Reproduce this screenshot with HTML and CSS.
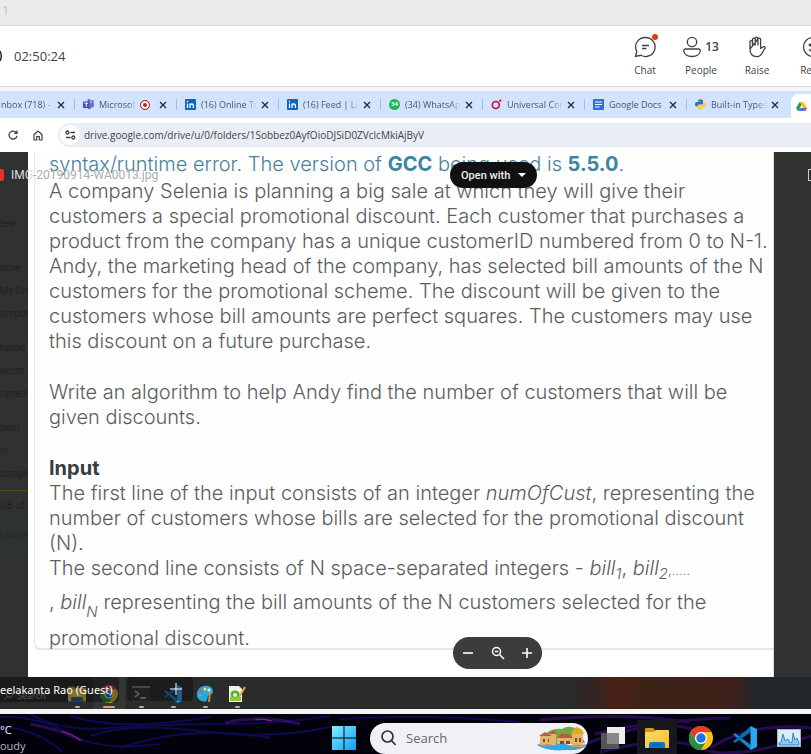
FILE: index.html
```html
<!DOCTYPE html>
<html lang="en">
<head>
<meta charset="utf-8">
<title>Meeting</title>
<link rel="stylesheet" href="styles.css">
</head>
<body>
<svg class="defs" aria-hidden="true">
  <defs>
    <linearGradient id="win" x1="0" y1="0" x2="1" y2="1"><stop offset="0" stop-color="#7ff0ff"/><stop offset="1" stop-color="#109bf5"/></linearGradient>
    <linearGradient id="fold" x1="0" y1="0" x2="1" y2="1"><stop offset="0" stop-color="#ffdc6b"/><stop offset="1" stop-color="#f9b92b"/></linearGradient>
  </defs>
  <symbol id="chrome" viewBox="0 0 24 24">
    <circle cx="12" cy="12" r="12" fill="#fbc116"/>
    <path d="M1.6 6A12 12 0 0 1 22.4 6H12A6 6 0 0 0 6.8 15Z" fill="#e33b2e"/>
    <path d="M1.6 6 6.8 15A6 6 0 0 0 17.2 15L12 24A12 12 0 0 1 1.6 6Z" fill="#229342"/>
    <circle cx="12" cy="12" r="6" fill="#fff"/><circle cx="12" cy="12" r="4.7" fill="#1a73e8"/>
  </symbol>
  <symbol id="vscode" viewBox="0 0 24 24">
    <path d="M0 8.500 2 7 18 19V24Z" fill="#0a86d4"/>
    <path d="M0 15.500 2 17 18 6V0Z" fill="#0b6ab0"/>
    <path d="M17.500 0 24 3V21L17.500 24Z" fill="#2ba5ee"/>
  </symbol>
  <symbol id="folder" viewBox="0 0 24 22">
    <path d="M0 2Q0 1 1 1H8L10 3V7H0Z" fill="#d9950b"/>
    <path d="M0 5H8.500L11 3H23Q24 3 24 4V20Q24 21 23 21H1Q0 21 0 20Z" fill="url(#fold)"/>
    <path d="M4 21V17Q4 15 6 15H18Q20 15 20 17V21Z" fill="#0d74c8"/><path d="M8 18H16" stroke="#075294"/>
  </symbol>
  <symbol id="linkedin" viewBox="0 0 11 11">
    <rect width="11" height="11" rx="1" fill="#0a66c2"/>
    <path d="M2.500 4.500V9M5 9V4.500M5 6.500Q5 5 6.700 5T8.400 6.500V9" fill="none" stroke="#fff" stroke-width="1.300"/><circle cx="2.500" cy="2.600" r=".8" fill="#fff"/>
  </symbol>
  <symbol id="close" viewBox="0 0 8 8"><path d="M1 1 7 7M7 1 1 7" stroke="#1f2a3a" stroke-width="1.300" fill="none"/></symbol>
</svg>

<div class="titlebar">1</div>

<header class="meeting">
  <div class="clock"><svg width="4" height="14" viewBox="0 0 4 14"><path d="M0 2Q2.500 7 0 12" stroke="#242424" stroke-width="1.500" fill="none"/></svg><span>02:50:24</span></div>
  <nav class="actions">
    <button class="action"><span class="glyph"><svg width="22" height="22" viewBox="0 0 22 22" fill="none" stroke="#424242" stroke-width="1.300"><path d="M11.500 1.500A9.500 9.500 0 1 1 7 19.300L1.500 20.500 2.800 15.500A9.500 9.500 0 0 1 11.500 1.500Z"/><path d="M8 9.500H15M8 12.500H12.500"/></svg><i class="dot"></i></span>Chat</button>
    <button class="action"><span class="glyph"><svg width="18" height="22" viewBox="0 0 18 22" fill="none" stroke="#424242" stroke-width="1.300"><circle cx="9" cy="6" r="4.700"/><path d="M2.500 13H15.500Q17.200 13 17.200 14.800C17.200 18.500 13.500 20.500 9 20.500S.8 18.500.8 14.800Q.8 13 2.500 13Z"/></svg><b>13</b></span>People</button>
    <button class="action"><span class="glyph"><svg width="18" height="22" viewBox="0 0 18 22" fill="none" stroke="#424242" stroke-width="1.300" stroke-linejoin="round"><path d="M2 13V5.500Q3.300 3.800 4.500 5.500V10M4.500 10V3Q5.800 1.200 7.200 3V9.500M7.200 3V2Q8.500.3 9.900 2V9.500M9.900 3Q11.300 1.200 12.600 3V12.500L15.300 10.700Q17 10.300 17.200 12C14.500 14.500 14.500 20.700 8.800 20.700C4 20.700 2 17.500 2 13Z"/></svg></span>Raise</button>
    <button class="action"><span class="glyph"><svg width="22" height="22" viewBox="0 0 22 22" fill="none" stroke="#424242" stroke-width="1.300"><circle cx="11" cy="11" r="9.500"/><path d="M7 13.500Q11 17 15 13.500"/><circle cx="8" cy="9" r=".8" fill="#424242"/><circle cx="14" cy="9" r=".8" fill="#424242"/></svg></span>React</button>
  </nav>
</header>

<div class="tabs">
  <div class="tab first"><span>nbox (718) -</span><button aria-label="Close"><svg><use href="#close"/></svg></button></div>
  <div class="tab"><svg class="fav" viewBox="0 0 11 11"><circle cx="6" cy="1.800" r="1.700" fill="#5b62d6"/><circle cx="9.500" cy="2.300" r="1.200" fill="#5b62d6"/><path d="M4 3.500H11V7Q10.500 9 8.700 8.500Q7.500 11 5 10Z" fill="#6b72dd"/><rect y="2.500" width="6.500" height="6.500" rx=".7" fill="#454bb5"/><path d="M1.500 4.200H5M3.250 4.200V7.800" stroke="#fff" fill="none"/></svg><span>Microsoft</span><i class="rec"></i><button aria-label="Close"><svg><use href="#close"/></svg></button></div>
  <div class="tab"><svg class="fav"><use href="#linkedin"/></svg><span>(16) Online Tutor</span><button aria-label="Close"><svg><use href="#close"/></svg></button></div>
  <div class="tab"><svg class="fav"><use href="#linkedin"/></svg><span>(16) Feed | LinkedIn</span><button aria-label="Close"><svg><use href="#close"/></svg></button></div>
  <div class="tab"><i class="fav whats">34</i><span>(34) WhatsApp</span><button aria-label="Close"><svg><use href="#close"/></svg></button></div>
  <div class="tab"><svg class="fav" viewBox="0 0 11 11"><circle cx="4.800" cy="6" r="3.500" fill="none" stroke="#c4113f" stroke-width="1.700"/><circle cx="9.200" cy="1.600" r="1.200" fill="#c4113f"/></svg><span>Universal Container</span><button aria-label="Close"><svg><use href="#close"/></svg></button></div>
  <div class="tab"><svg class="fav" viewBox="0 0 11 11"><rect width="11" height="11" rx="1" fill="#2f6fe4"/><path d="M2 3H9M2 5.500H9M2 8H6.500" stroke="#fff" stroke-width="1.200"/></svg><span class="whole">Google Docs</span><button aria-label="Close"><svg><use href="#close"/></svg></button></div>
  <div class="tab"><svg class="fav" viewBox="0 0 11 11"><path d="M2.800 2Q2.800.2 5.500.2T8 2V4.500Q8 5.500 7 5.500H4Q2.500 5.500 2.500 7.500H1.500Q0 7.500 0 5.200T1.500 3H5.500V2.500H2.800Z" fill="#3572a5"/><path d="M8.200 9Q8.200 10.800 5.500 10.800T3 9V7Q3 5.900 4 5.900H7Q8.500 5.900 8.500 3.500H9.500Q11 3.500 11 5.800T9.500 8H5.500V8.500H8.200Z" fill="#fbcf3a"/></svg><span>Built-in Types</span><button aria-label="Close"><svg><use href="#close"/></svg></button></div>
  <div class="tab active"><svg class="fav" viewBox="0 0 11 11"><path d="M3.700 1H7.300L5.500 4 2 10 0 7Z" fill="#12a05c"/><path d="M3.700 1H7.300L11 7H7.300Z" fill="#fbbc04"/><path d="M2 10 3.800 7H11L9 10Z" fill="#3b7ded"/><path d="M7.300 7H11L9.200 10Z" fill="#e53e30"/></svg></div>
</div>

<div class="address">
  <button aria-label="Reload"><svg width="10" height="10" viewBox="0 0 10 10" fill="none" stroke="#3c4043" stroke-width="1.300"><path d="M8.500 3A4 4 0 1 0 9 5.800M9 .5V3.300H6.200"/></svg></button>
  <button aria-label="Home"><svg width="10" height="11" viewBox="0 0 10 11" fill="none" stroke="#3c4043" stroke-width="1.200"><path d="M1 4.500 5 1 9 4.500V10H6.300V6.500H3.700V10H1Z"/></svg></button>
  <div class="omnibox">
    <span class="site"><svg width="11" height="10" viewBox="0 0 11 10" fill="none" stroke="#3c4043" stroke-width="1.300"><circle cx="2.500" cy="2.500" r="1.500"/><path d="M5.500 2.500H10M1 7.500H5.500"/><circle cx="8.300" cy="7.500" r="1.500"/></svg></span>
    <input aria-label="Address" value="drive.google.com/drive/u/0/folders/1Sobbez0AyfOioDJSiD0ZVclcMkiAjByV">
  </div>
</div>

<main class="viewer">
  <aside class="side">
    <p class="gap-xl">iew</p>
    <p class="gap-l">ome</p><p>My Drive</p><p>omputers</p>
    <p class="gap-m">hared</p><p>ecent</p><p>tarred</p>
    <p class="gap-m">pam</p><p>in</p><p>torage</p>
    <hr>
    <p>GB of 15</p>
    <p class="more">t more</p>
  </aside>
  <article class="sheet">
    <div class="card">
      <p class="lead">syntax/runtime error. The version of <b>GCC</b> being used is <b>5.5.0</b>.</p>
      <p class="story">A company Selenia is planning a big sale at which they will give their<br>customers a special promotional discount. Each customer that purchases a<br>product from the company has a unique customerID numbered from 0 to N-1.<br>Andy, the marketing head of the company, has selected bill amounts of the N<br>customers for the promotional scheme. The discount will be given to the<br>customers whose bill amounts are perfect squares. The customers may use<br>this discount on a future purchase.</p>
      <p class="goal">Write an algorithm to help Andy find the number of customers that will be<br>given discounts.</p>
      <h2>Input</h2>
      <p class="format">The first line of the input consists of an integer <em>numOfCust</em>, representing the<br>number of customers whose bills are selected for the promotional discount<br>(N).<br>The second line consists of N space-separated integers - <em>bill<sub>1</sub></em>, <em>bill<sub>2</sub></em><small>,.....</small></p>
      <p class="bills">, <em>bill<sub>N</sub></em> representing the bill amounts of the N customers selected for the</p>
      <p class="last">promotional discount.</p>
    </div>
  </article>
  <aside class="edge"><i></i></aside>
  <div class="file"><i class="thumb"></i><span>IMG</span>-20190914-WA0013.jpg</div>
  <button class="open">Open with <i></i></button>
  <div class="zoom">
    <button aria-label="Zoom out"><svg width="12" height="12" viewBox="0 0 12 12"><path d="M1 6H11" stroke="#fff" stroke-width="1.600"/></svg></button>
    <button aria-label="Fit"><svg width="14" height="14" viewBox="0 0 14 14" fill="none" stroke="#fff" stroke-width="1.500"><circle cx="5.500" cy="5.500" r="4"/><path d="M8.500 8.500 13 13M3.800 5.500H7.200"/></svg></button>
    <button aria-label="Zoom in"><svg width="12" height="12" viewBox="0 0 12 12"><path d="M1 6H11M6 1V11" stroke="#fff" stroke-width="1.600"/></svg></button>
  </div>
</main>

<div class="shared-bar">
  <div class="shared-search"><svg width="10" height="10" viewBox="0 0 10 10" fill="none" stroke="#999"><circle cx="5.500" cy="4" r="3.300"/><path d="M3.200 6.500 0 9.700"/></svg>Search</div>
  <div class="app"><svg width="18" height="18"><use href="#folder"/></svg></div>
  <div class="app on"><svg width="18" height="18"><use href="#chrome"/></svg></div>
  <div class="app"><svg width="18" height="16" viewBox="0 0 18 16"><rect width="18" height="16" rx="1" fill="#303336"/><path d="M0 1H18" stroke="#777" stroke-width="2"/><path d="M3 5 7 8 3 11M8 12H14" stroke="#bbb" fill="none" stroke-width="1.300"/></svg></div>
  <div class="app"><svg width="18" height="18"><use href="#vscode"/></svg></div>
  <div class="app"><svg width="18" height="18" viewBox="0 0 18 18"><path d="M8 1C14 0 17 3 17 7C17 10 13 9 12 11S12 17 8 16.500C3 16 0 12 1 8S4 1.500 8 1Z" fill="#2aa6de"/><circle cx="5" cy="6" r="1.500" fill="#f04c3c"/><circle cx="9" cy="4" r="1.500" fill="#ffe05a"/><circle cx="4" cy="10" r="1.500" fill="#48c774"/><circle cx="13" cy="5" r="1.500" fill="#fff"/><path d="M13 7 12 17H14L15 7Z" fill="#c98a4b"/></svg></div>
  <div class="app"><svg width="18" height="18" viewBox="0 0 18 18"><path d="M1 1H11L14 4V17H1Z" fill="#f3f3e6"/><path d="M2 12Q7 8 13 12V16H2Z" fill="#8fc93a"/><ellipse cx="7" cy="9" rx="4.500" ry="3.500" fill="#5ab031"/><circle cx="7" cy="10" r="2" fill="#e7f6c8"/><path d="M17 2 11 12" stroke="#e0a63a" stroke-width="2"/></svg></div>
  <div class="speaker">eelakanta Rao (Guest)</div>
  <div class="hover"></div>
  <svg class="cross" width="12" height="12" viewBox="0 0 12 12"><path d="M0 6H12M6 0V12" stroke="#fff"/></svg>
</div>

<footer class="taskbar">
  <svg class="swirl" viewBox="0 0 811 40" preserveAspectRatio="none" fill="none">
    <g stroke="#19107a" stroke-width="2" opacity=".6"><path d="M0 3Q40 2 70 20T160 30"/><path d="M30 0Q60 18 110 14T220 10T330 2"/><path d="M90 22Q130 8 200 17T330 13"/><path d="M0 12Q40 16 62 38"/><path d="M120 34Q190 10 270 24"/><path d="M70 2Q120 18 210 3"/><path d="M340 5Q430 0 520 8"/></g>
    <g stroke="#4a1594" stroke-width="3" opacity=".5"><path d="M30 10Q60 15 82 27"/><path d="M225 9Q260 0 300 10"/><path d="M540 6Q620 -2 690 8"/><path d="M585 30Q650 5 730 4"/><path d="M595 20Q660 2 700 18"/><path d="M710 34Q750 8 811 14"/><path d="M600 38Q670 20 700 34T811 22"/></g>
    <path d="M62 17Q72 20 80 26M255 6Q263 4 272 7" stroke="#a0238d"/>
  </svg>
  <div class="weather"><span>°C</span><span>oudy</span></div>
  <div class="dock">
    <button class="start" aria-label="Start"><svg width="24" height="24" viewBox="0 0 24 24" fill="url(#win)"><path d="M0 0H11.500V11.500H0ZM12.500 0H24V11.500H12.500ZM0 12.500H11.500V24H0ZM12.500 12.500H24V24H12.500Z"/></svg></button>
    <label class="search"><svg width="15" height="16" viewBox="0 0 15 16" fill="none" stroke="#333" stroke-width="1.700"><circle cx="6.500" cy="6.500" r="5.500"/><path d="M10.500 10.500 14.500 15"/></svg><input placeholder="Search" aria-label="Search">
      <svg class="art" width="50" height="26" viewBox="0 0 50 26"><path d="M4 12Q15 2 25 4Q32 -1 42 5L48 18H3Z" fill="#72a747"/><path d="M0 20Q12 13 25 18T50 19Q46 26 30 25Q10 27 0 20Z" fill="#35a8df"/><path d="M3 11H14V20H3ZM13 9H19V20H13ZM20 13H35V19H20ZM35 9H46V22H35Z" fill="#e4b66c"/><path d="M2 11 8 7 15 11ZM12 9 16 5 20 9ZM20 13 24 9H32L36 13Z" fill="#b75d3b"/><path d="M34 9Q35 4 40 2Q46 4 47 9Z" fill="#e5a625"/><path d="M23 19V16H27V19M29 19V16H33V19M6 14H8V17H6ZM11 14H12V17H11ZM38 13H40V17H38ZM42 13H44V17H42Z" fill="#754b35"/><path d="M3 21Q11 17 18 21ZM33 22Q40 18 47 21Z" fill="#d28d52"/></svg>
    </label>
    <button class="pin" aria-label="Task view"><svg width="24" height="24" viewBox="0 0 24 24"><rect x="6" y="1" width="18" height="17" fill="#eee"/><rect y="7" width="18" height="16" fill="#555"/><rect x="6" y="7" width="12" height="11" fill="#888"/></svg></button>
    <button class="pin current" aria-label="Files"><svg width="24" height="22"><use href="#folder"/></svg></button>
    <button class="pin" aria-label="Browser"><svg width="24" height="24"><use href="#chrome"/></svg></button>
    <button class="pin" aria-label="Editor"><svg width="24" height="24"><use href="#vscode"/></svg></button>
    <button class="pin" aria-label="Monitor"><svg width="24" height="18" viewBox="0 0 24 18"><rect x=".5" y=".5" width="23" height="17" fill="#dcebf5" stroke="#aab3ba"/><path d="M2 16V14L4 13 6 5 8 12 11 10 13 14 15 13 16 4 18 11 20 9 22 14V16Z" fill="#8cc8ef" stroke="#1b85cf" stroke-width=".9"/></svg></button>
  </div>
</footer>
</body>
</html>
```
FILE: styles.css
```css
* { box-sizing: border-box; }
body {
  margin: 0;
  min-height: 100vh;
  overflow: hidden;
  display: flex;
  flex-direction: column;
  background: #f5f5f5;
  font-family: "Open Sans", "Noto Sans", sans-serif;
  color: #424242;
}
p, h2 { margin: 0; }
button { border: 0; padding: 0; background: none; font: inherit; color: inherit; display: flex; align-items: center; justify-content: center; }
input { border: 0; padding: 0; background: none; font: inherit; color: inherit; outline: 0; min-width: 0; }
svg { display: block; flex: none; }
.defs { position: absolute; width: 0; height: 0; }

.titlebar { height: 26px; padding-left: 2px; background: #ebebeb; border-bottom: 1px solid #d8d8d8; font-size: 13px; line-height: 20px; color: #b8c3dc; }

.meeting { height: 61px; display: flex; justify-content: space-between; align-items: center; overflow: hidden; background: #fff; border-bottom: 1px solid #d6d6d6; }
.clock { display: flex; align-items: center; gap: 10px; font-size: 13px; }
.actions { display: flex; margin-right: -30px; }
.action { width: 56px; flex-direction: column; font-size: 10px; line-height: 16px; gap: 3px; }
.glyph { position: relative; display: flex; align-items: center; gap: 4px; height: 24px; }
.glyph b { font-size: 12px; font-weight: 600; }
.dot { position: absolute; right: -2px; top: -1px; width: 6px; height: 6px; border-radius: 50%; background: #dc3e0b; }

.tabs { height: 27px; margin-top: 4px; display: flex; overflow: hidden; background: #d3e3fd; font: 9px "Open Sans", sans-serif; color: #4a566b; }
.tab { flex: none; width: 102px; padding: 0 9px 0 8px; display: flex; align-items: center; position: relative; border-left: 1px solid transparent; }
.tab::before { content: ""; position: absolute; left: -1px; top: 8px; height: 11px; width: 1px; background: #9dbfec; }
.tab.first { width: 74px; padding-left: 0; }
.tab.first::before, .tab.active::before { display: none; }
.tab span { flex: 1; overflow: hidden; white-space: nowrap; margin-right: 4px; mask-image: linear-gradient(90deg, #000 80%, transparent); }
.tab .whole { margin-right: 0; mask-image: none; }
.tab button svg { width: 8px; height: 8px; }
.fav { width: 11px; height: 11px; margin-right: 5px; flex: none; }
.whats { border-radius: 50%; background: #1fb855; color: #fff; font: bold 6px/11px "Open Sans", sans-serif; text-align: center; }
.rec { flex: none; width: 10px; height: 10px; margin-right: 9px; border: 1px solid #b3261e; border-radius: 50%; background: #b3261e; box-shadow: inset 0 0 0 2px #fff; }
.tab.active { margin: 3px 0 0 3px; padding-left: 4px; background: #fff; border-radius: 8px 0 0 0; }

.address { height: 34px; padding: 0 0 0 8px; display: flex; align-items: center; gap: 15px; background: #fff; }
.omnibox { flex: 1; height: 24px; padding: 2px; display: flex; align-items: center; gap: 4px; background: #e9eef6; border-radius: 12px 0 0 12px; font-size: 10px; }
.site { width: 20px; height: 20px; display: flex; align-items: center; justify-content: center; background: #fff; border-radius: 50%; }
.omnibox input { flex: 1; }

.viewer { flex: 1; position: relative; display: grid; grid-template-columns: 28px minmax(0, 1fr) 37px; overflow: hidden; background: #303131; }
.side { overflow: hidden; white-space: nowrap; font: 10px/23px Roboto, sans-serif; color: #202121; }
.gap-xl { margin-top: 60px; }
.gap-l { margin-top: 21px; }
.gap-m { margin-top: 11px; }
.side hr { margin: 5px 0 3px; border: 0; border-top: 1px solid #56471f; }
.side .more { margin-top: 5px; border: solid #263a3a; border-width: 1px 0; color: #1c2b30; }
.sheet { background: #fff; overflow: hidden; border-right: 1px solid #ddd; }
.card { height: 498px; margin-left: 6px; padding: 0 0 0 14px; border: solid #e6e6e6; border-width: 0 0 2px 1px; border-radius: 0 0 0 6px; white-space: nowrap; background: #fefefe; font: 300 20px/25px Inter, "Open Sans", sans-serif; color: #5a5d60; }
.card b { font-weight: 700; color: #3a86a0; }
.card .lead { color: #4a8299; }
.story { padding-top: 2px; }
.goal { margin-top: 26px; }
.card h2 { margin-top: 26px; font-size: 20px; line-height: 25px; font-weight: 700; color: #363c42; }
.card sub { font-size: 15px; line-height: 0; vertical-align: -4px; }
.card small { font-size: 13px; }
.bills { margin-top: 7px; }
.bills sub { vertical-align: -8px; }
.last { margin-top: 11px; }
.edge i { position: absolute; right: 0; top: 17px; width: 3px; height: 12px; border: solid #ccc; border-width: 1px 0 1px 1px; }
.file { position: absolute; left: 0; top: 13px; display: flex; align-items: center; color: #a9adb0; font: 12px/20px Roboto, sans-serif; }
.file span { color: #ddd; }
.thumb { width: 4px; height: 12px; margin-right: 7px; background: #e3342b; border-radius: 0 2px 2px 0; }
.open { position: absolute; left: 450px; top: 10px; height: 26px; padding: 0 11px; gap: 8px; border-radius: 13px; background: #111; color: #f1f1f1; font: 500 11px Roboto, sans-serif; }
.open i { border: 4px solid transparent; border-top-color: #fff; border-bottom: 0; }
.zoom { position: absolute; left: 453px; bottom: 8px; width: 89px; height: 32px; padding: 0 9px; display: flex; align-items: center; justify-content: space-between; background: #3c3c3c; border-radius: 16px; }

.shared-bar { position: relative; height: 32px; display: flex; background: linear-gradient(90deg, #2a2b2b 70%, #302522 73%, #4a2016 76%, #3b2318 80%, #40201a 90%, #22272a 93%); }
.shared-search { width: 61px; padding: 4px 0 0 4px; display: flex; align-items: center; gap: 3px; font-size: 9px; color: #999; }
.app { width: 32px; padding-top: 2px; display: flex; align-items: center; justify-content: center; position: relative; }
.app.on { background: #363636; }
.app::after { content: ""; position: absolute; bottom: 1px; width: 5px; height: 2px; border-radius: 1px; background: #aaa; }
.app.on::after { width: 12px; background: #d9a078; }
.speaker { position: absolute; left: 0; top: 0; height: 25px; width: 119px; overflow: hidden; white-space: nowrap; border-radius: 0 4px 4px 0; background: rgba(12, 12, 12, .5); color: #fff; font: 11px/25px "Noto Sans", sans-serif; }
.hover { position: absolute; left: 127px; top: 0; width: 66px; height: 24px; border-radius: 4px; background: rgba(12, 12, 12, .45); }
.cross { position: absolute; left: 170px; top: 6px; }

.taskbar { position: relative; height: 40px; margin-top: 5px; display: flex; align-items: center; justify-content: space-between; overflow: hidden; background: #02020c; color: #f4f4f4; }
.swirl { position: absolute; inset: 0; width: 100%; height: 100%; }
.weather { position: relative; display: flex; flex-direction: column; padding-top: 8px; font-size: 11px; line-height: 16px; }
.weather span + span { color: #b5b5bd; }
.dock { position: relative; display: flex; align-items: center; align-self: stretch; padding: 8px 0 0; }
.start { margin-right: 14px; }
.search { width: 218px; height: 31px; margin-right: 3px; padding: 0 1px 0 11px; display: flex; align-items: center; gap: 10px; border-radius: 16px; background: #f1f0f5; color: #666; font-size: 13px; }
.search input { flex: 1; }
.search input::placeholder { color: #666; opacity: 1; }
.pin { width: 44px; height: 36px; }
.current { background: linear-gradient(90deg, transparent 2px, #171720 2px, #171720 42px, transparent 42px); }
```
